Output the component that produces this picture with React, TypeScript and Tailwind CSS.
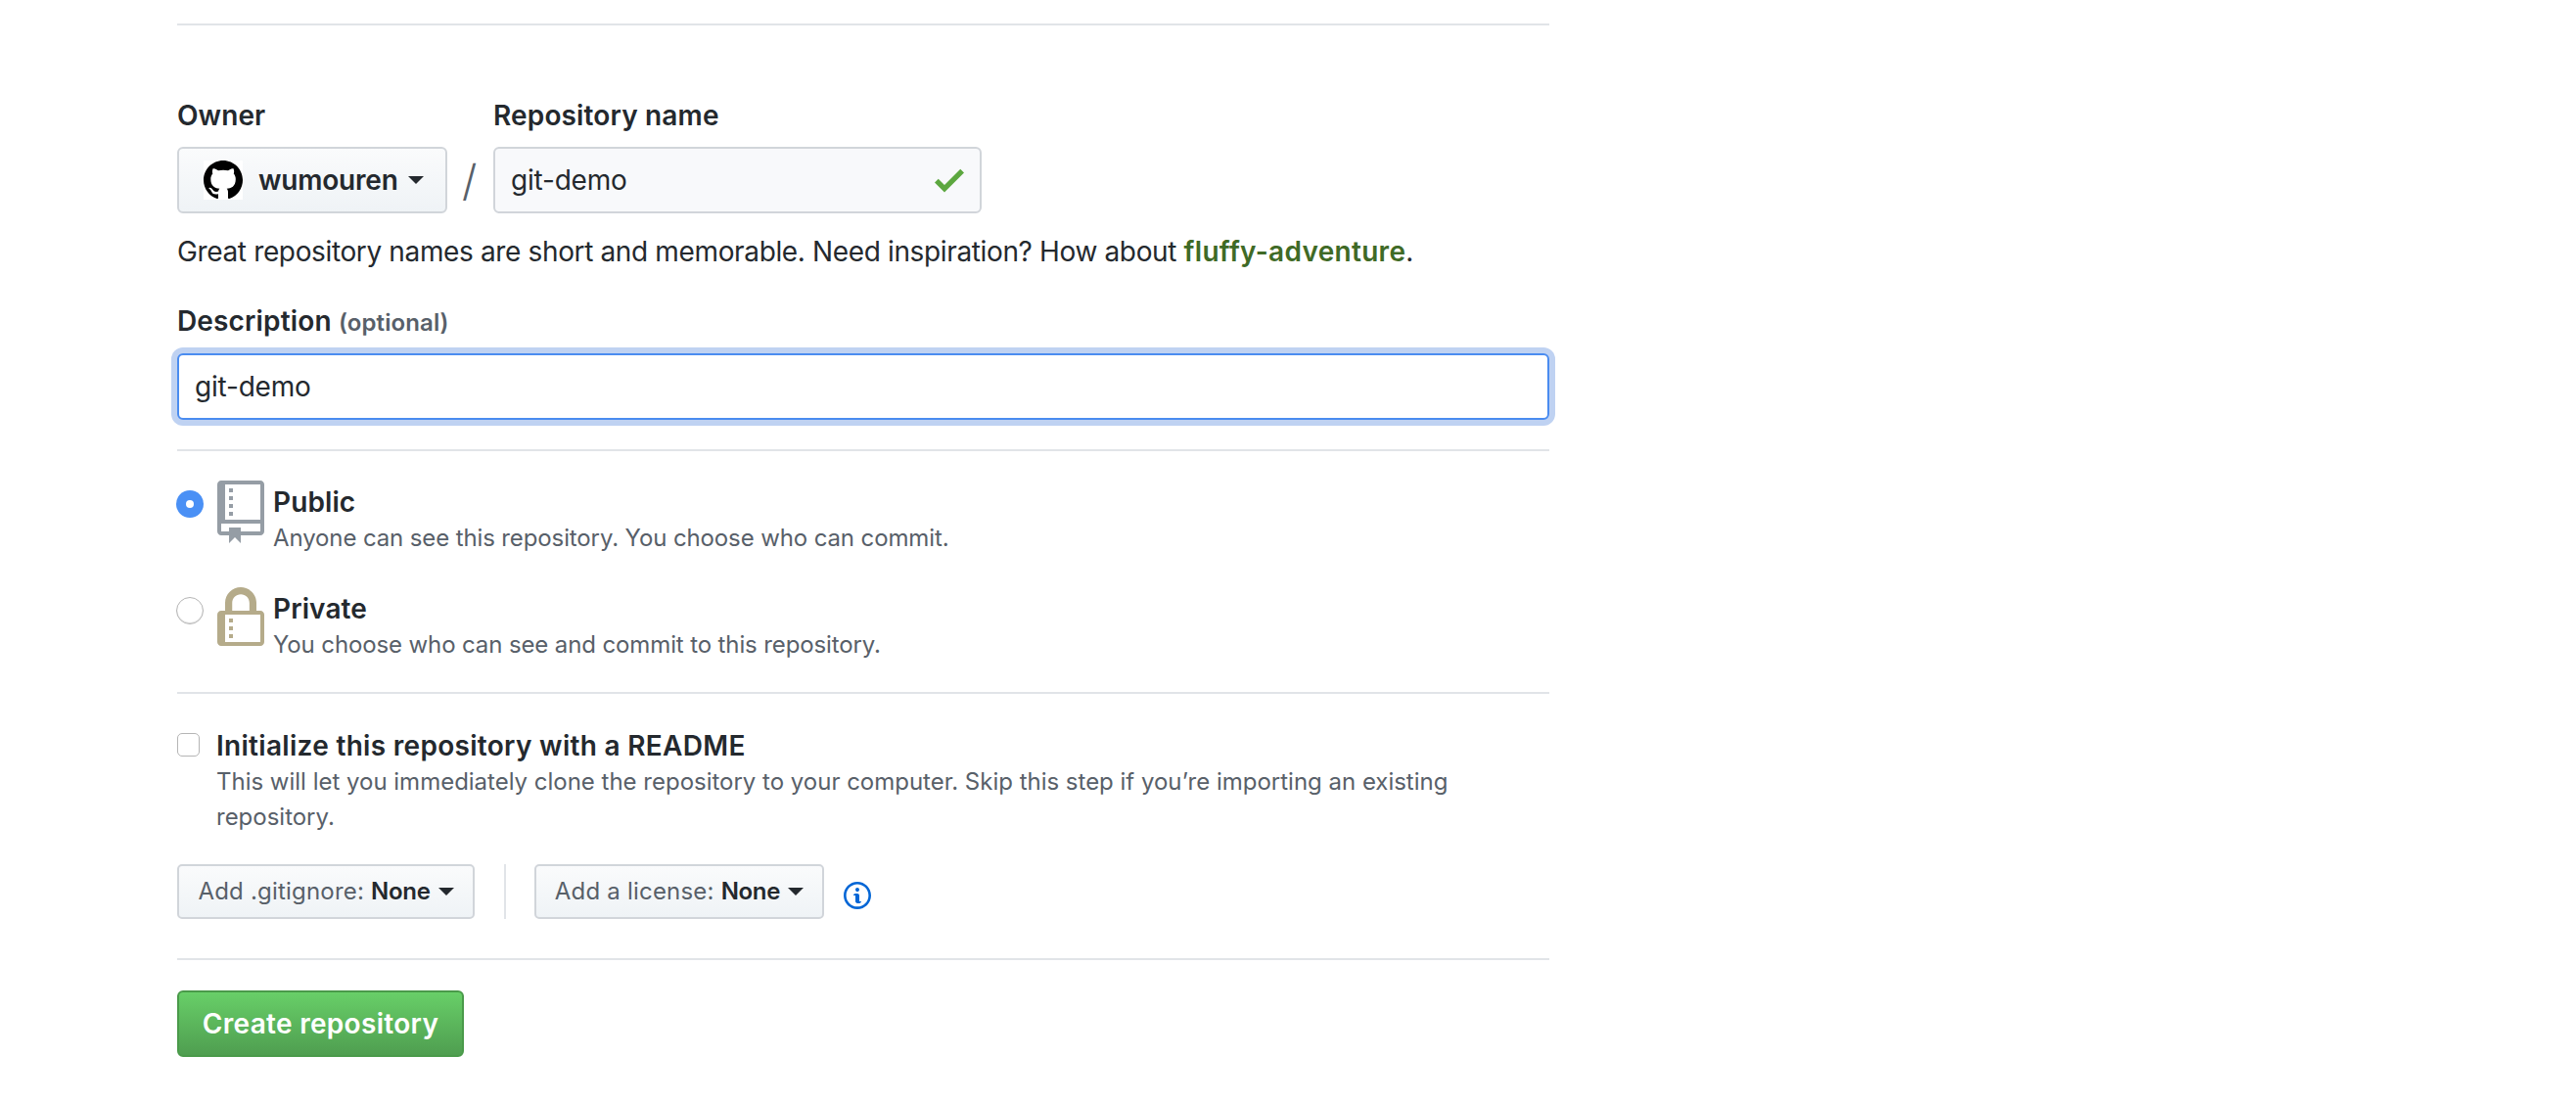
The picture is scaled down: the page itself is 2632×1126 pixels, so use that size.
function Caret() {
  return <span className="inline-block border-x-[8px] border-t-[8px] border-x-transparent border-t-[#24292e]" />;
}

function RadioRow({ checked, icon, title, text, className }: { checked?: boolean; icon: React.ReactNode; title: string; text: string; className?: string }) {
  return (
    <div className={"flex " + (className ?? "")}>
      <div className="w-[40px] -ml-[1px] mr-[2px] pt-[8px] shrink-0">
        {checked ? (
          <div className="w-[28px] h-[28px] rounded-full bg-[#4a90f5] flex items-center justify-center">
            <div className="w-[8px] h-[8px] rounded-full bg-white" />
          </div>
        ) : (
          <div className="w-[28px] h-[28px] rounded-full bg-white border border-[#b5b5b5] shadow-[inset_0_-1px_1px_#ddd]" />
        )}
      </div>
      <div className="w-[57px] shrink-0 -mt-[2px]">{icon}</div>
      <div>
        <div className="text-[28px] leading-[36px] font-semibold text-[#24292e] mt-[2px] tracking-[0.1px]">{title}</div>
        <div className="text-[24px] leading-[36px] text-[#586069] mt-[1px] tracking-[-0.12px]">{text}</div>
      </div>
    </div>
  );
}

function SelectButton({ label, width }: { label: string; width: string }) {
  return (
    <div className={"h-[56px] rounded-[5px] border-2 border-[#d1d5da] bg-gradient-to-b from-[#fafbfc] to-[#eff3f6] flex items-center justify-center gap-[8px] text-[24px] text-[#586069] tracking-[0.2px] " + width}>
      <span>
        {label}: <b className="font-semibold text-[#24292e] tracking-[-0.3px]">None</b>
      </span>
      <Caret />
    </div>
  );
}

export default function App() {
  return (
    <div className="w-[2632px] h-[1126px] bg-white overflow-hidden font-['Inter','Liberation_Sans',sans-serif]">
      <div className="ml-[181px] w-[1402px] pt-[24px]">
        <div className="h-[2px] bg-[#e1e4e8]" />

        <div className="flex mt-[74px]">
          <div className="w-[323px]">
            <div className="text-[28px] leading-[36px] font-semibold text-[#24292e] tracking-[0.1px]">Owner</div>
            <div className="mt-[14px] flex items-center">
              <div className="w-[276px] h-[68px] shrink-0 rounded-[6px] border-2 border-[#d1d5da] bg-gradient-to-b from-[#fafbfc] to-[#eff3f6] flex items-center pl-[25px]">
                <div className="w-[40px] h-[40px] bg-white">
                  <svg viewBox="0 0 16 16" className="w-[40px] h-[40px]" fill="#000">
                    <path d="M8 0C3.58 0 0 3.58 0 8c0 3.54 2.29 6.53 5.47 7.59.4.07.55-.17.55-.38 0-.19-.01-.82-.01-1.49-2.01.37-2.53-.49-2.69-.94-.09-.23-.48-.94-.82-1.13-.28-.15-.68-.52-.01-.53.63-.01 1.08.58 1.23.82.72 1.21 1.87.87 2.33.66.07-.52.28-.87.51-1.07-1.78-.2-3.64-.89-3.64-3.95 0-.87.31-1.59.82-2.15-.08-.2-.36-1.02.08-2.12 0 0 .67-.21 2.2.82.64-.18 1.32-.27 2-.27.68 0 1.36.09 2 .27 1.53-1.04 2.2-.82 2.2-.82.44 1.1.16 1.92.08 2.12.51.56.82 1.27.82 2.15 0 3.07-1.87 3.75-3.65 3.95.29.25.54.73.54 1.48 0 1.07-.01 1.93-.01 2.2 0 .21.15.46.55.38A8.013 8.013 0 0 0 16 8c0-4.42-3.58-8-8-8z" />
                  </svg>
                </div>
                <span className="ml-[16px] text-[28px] font-semibold text-[#24292e] tracking-[-0.2px]">wumouren</span>
                <span className="ml-[10px] flex"><Caret /></span>
              </div>
              <span className="ml-[15px] text-[44px] leading-[68px] font-light text-[#586069]">/</span>
            </div>
          </div>
          <div>
            <div className="text-[28px] leading-[36px] font-semibold text-[#24292e] tracking-[0.15px]">Repository name</div>
            <div className="mt-[14px] w-[499px] h-[68px] rounded-[6px] border-2 border-[#d1d5da] bg-[#f8f9fb] flex items-center justify-between pl-[16px] pr-[16px] text-[28px] text-[#24292e] tracking-[-0.2px]">
              <span>git-demo</span>
              <svg viewBox="0 0 12 16" className="w-[30px] h-[40px]" fill="#5ca73f">
                <path d="M12 5l-8 8-4-4 1.5-1.5L4 10l6.5-6.5L12 5z" />
              </svg>
            </div>
          </div>
        </div>

        <p className="mt-[21px] text-[28px] leading-[36px] text-[#24292e] tracking-[-0.36px]">
          Great repository names are short and memorable. Need inspiration? How about{" "}
          <b className="font-semibold text-[#3f6a26] tracking-[0.3px]">fluffy-adventure</b>.
        </p>

        <div className="mt-[35px] text-[28px] leading-[36px] font-semibold text-[#24292e] tracking-[0.15px]">
          Description <span className="text-[24px] text-[#586069] tracking-[0.1px]">(optional)</span>
        </div>
        <div className="mt-[13px] h-[68px] rounded-[6px] border-2 border-[#4a8cf0] bg-white shadow-[0_0_0_6px_#bfd2f2] flex items-center pl-[16px] text-[28px] text-[#24292e] tracking-[-0.2px]">
          git-demo
        </div>

        <div className="mt-[30px] h-[2px] bg-[#e1e4e8]" />

        <RadioRow
          className="mt-[32px]"
          checked
          title="Public"
          text="Anyone can see this repository. You choose who can commit."
          icon={
            <svg viewBox="0 0 12 16" className="w-[48px] h-[64px]" fill="#959da5">
              <path d="M4 9H3V8h1v1zm0-3H3v1h1V6zm0-2H3v1h1V4zm0-2H3v1h1V2zm8-1v12c0 .55-.45 1-1 1H6v2l-1.5-1.5L3 16v-2H1c-.55 0-1-.45-1-1V1c0-.55.45-1 1-1h10c.55 0 1 .45 1 1zm-1 10H1v2h2v-1h3v1h5v-2zm0-10H2v9h9V1z" />
            </svg>
          }
        />
        <RadioRow
          className="mt-[34px]"
          title="Private"
          text="You choose who can see and commit to this repository."
          icon={
            <svg viewBox="0 0 12 16" className="w-[48px] h-[64px]" fill="#b5ab8a">
              <path d="M4 13H3v-1h1v1zm8-6v7c0 .55-.45 1-1 1H1c-.55 0-1-.45-1-1V7c0-.55.45-1 1-1h1V4c0-2.2 1.8-4 4-4s4 1.8 4 4v2h1c.55 0 1 .45 1 1zM3.8 6h4.41V4c0-1.22-.98-2.2-2.2-2.2-1.22 0-2.2.98-2.2 2.2v2H3.8zM11 7H2v7h9V7zM4 8H3v1h1V8zm0 2H3v1h1v-1z" />
            </svg>
          }
        />

        <div className="mt-[30px] h-[2px] bg-[#e1e4e8]" />

        <div className="flex mt-[35px]">
          <div className="w-[40px] shrink-0 pt-[5px]">
            <div className="w-[23px] h-[24px] rounded-[5px] border border-[#b5b5b5] bg-white" />
          </div>
          <div>
            <div className="text-[28px] leading-[36px] font-semibold text-[#24292e] tracking-[0.3px]">Initialize this repository with a README</div>
            <div className="w-[1340px] text-[24px] leading-[36px] text-[#586069] mt-[1px] tracking-[-0.01px]">
              This will let you immediately clone the repository to your computer. Skip this step if you’re importing an existing repository.
            </div>
          </div>
        </div>

        <div className="flex items-center mt-[30px]">
          <SelectButton label="Add .gitignore" width="w-[304px]" />
          <div className="w-[2px] h-[56px] bg-[#e1e4e8] ml-[30px] mr-[29px]" />
          <SelectButton label="Add a license" width="w-[296px]" />
          <svg viewBox="0 0 14 16" className="ml-[20px] mt-[8px] w-[28px] h-[32px]" fill="#0366d6">
            <path d="M6.3 5.69a.942.942 0 0 1-.28-.7c0-.28.09-.52.28-.7.19-.18.42-.28.7-.28.28 0 .52.09.7.28.18.19.28.42.28.7 0 .28-.09.52-.28.7a1 1 0 0 1-.7.3c-.28 0-.52-.11-.7-.3zM8 7.99c-.02-.25-.11-.48-.31-.69-.2-.19-.42-.3-.69-.31H6c-.27.02-.48.13-.69.31-.2.2-.3.44-.31.69h1v3c.02.27.11.5.31.69.2.2.42.31.69.31h1c.27 0 .48-.11.69-.31.2-.19.3-.42.31-.69H8V7.98v.01zM7 2.3c-3.14 0-5.7 2.54-5.7 5.68 0 3.14 2.56 5.7 5.7 5.7s5.7-2.55 5.7-5.7c0-3.15-2.56-5.69-5.7-5.69v.01zM7 .98c3.86 0 7 3.14 7 7s-3.14 7-7 7-7-3.12-7-7 3.14-7 7-7z" />
          </svg>
        </div>

        <div className="mt-[40px] h-[2px] bg-[#e1e4e8]" />

        <div className="mt-[31px] w-[293px] h-[68px] rounded-[6px] border-2 border-[#4a9a4a] bg-gradient-to-b from-[#68cf68] to-[#4f9e50] flex items-center justify-center text-[28px] font-semibold text-white tracking-[0.3px]">
          Create repository
        </div>
      </div>
    </div>
  );
}
